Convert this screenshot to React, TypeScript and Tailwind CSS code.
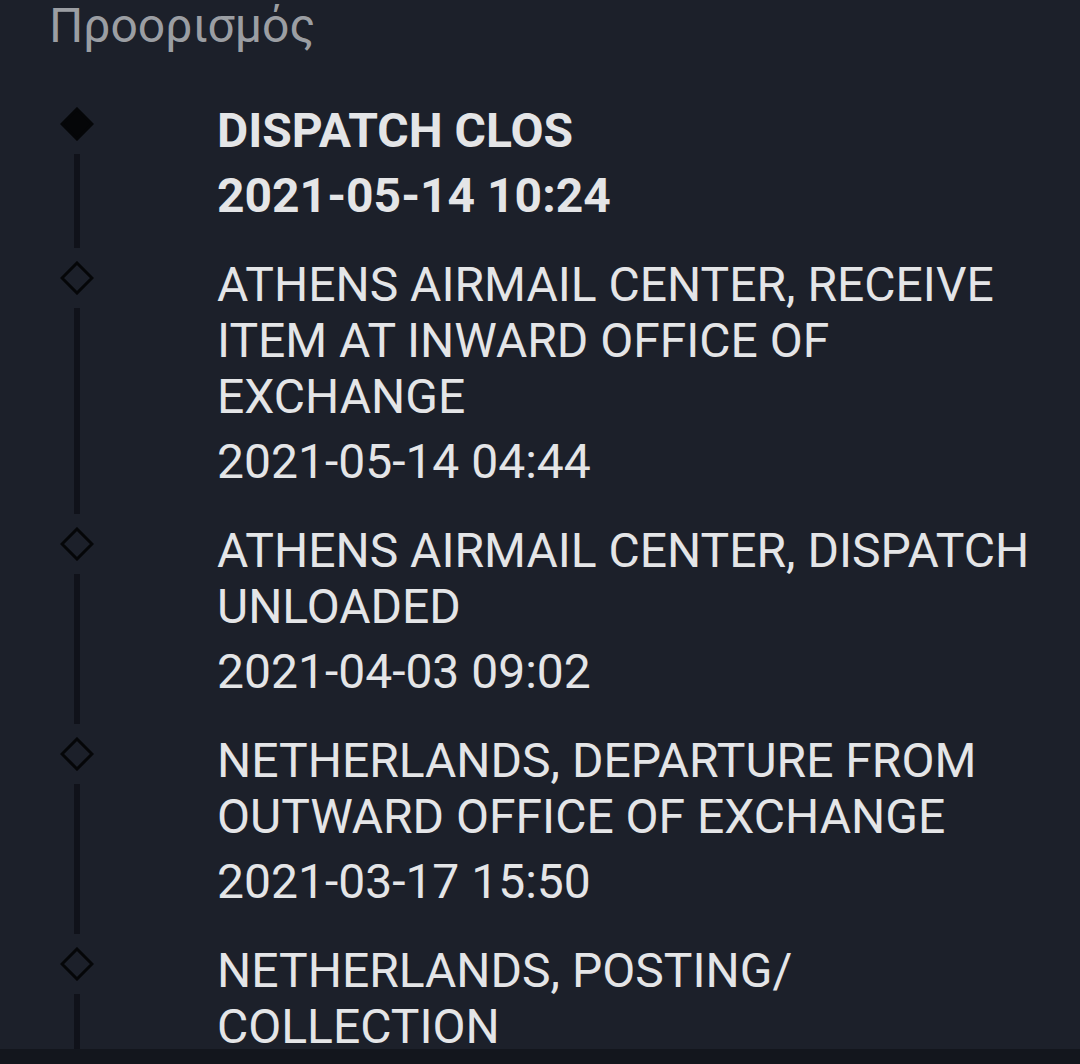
import React from "react";

type Item = { title: React.ReactNode; date: string; bold?: boolean };

const items: Item[] = [
  { title: "DISPATCH CLOS", date: "2021-05-14 10:24", bold: true },
  { title: "ATHENS AIRMAIL CENTER, RECEIVE ITEM AT INWARD OFFICE OF EXCHANGE", date: "2021-05-14 04:44" },
  { title: "ATHENS AIRMAIL CENTER, DISPATCH UNLOADED", date: "2021-04-03 09:02" },
  { title: "NETHERLANDS, DEPARTURE FROM OUTWARD OFFICE OF EXCHANGE", date: "2021-03-17 15:50" },
  {
    title: (
      <>
        NETHERLANDS, POSTING/
        <wbr />
        COLLECTION
      </>
    ),
    date: "2021-03-17 09:12",
  },
];

function Diamond({ filled }: { filled?: boolean }) {
  return (
    <svg width="34" height="34" viewBox="0 0 34 34" className="shrink-0 mt-[4px]">
      <polygon
        points="17,2 32,17 17,32 2,17"
        fill={filled ? "#050608" : "none"}
        stroke="#050608"
        strokeWidth="3"
        strokeLinejoin="miter"
      />
    </svg>
  );
}

export default function App() {
  return (
    <div className="w-[1080px] h-[1064px] bg-[#1c202a] flex flex-col overflow-hidden font-['Roboto',sans-serif]">
      <div className="flex-1 min-h-0 overflow-hidden pl-[48px] pr-[40px]">
        <div className="text-[48px] leading-[56px] text-[#9b9ea3] -mt-[2px] pl-[1px]">Προορισμός</div>
        <div className="mt-[49px] flex flex-col">
          {items.map((it, i) => (
            <div key={i} className="flex">
              <div className="w-[58px] flex flex-col items-center shrink-0">
                <Diamond filled={i === 0} />
                <div className="w-[6px] flex-1 mt-[13px] mb-[9px] bg-[#10121a]" />
              </div>
              <div
                className={
                  "ml-[111px] flex-1 pb-[33px] text-[48px] leading-[56px] text-[#e4e5e7] " +
                  (it.bold ? "font-bold" : "font-normal")
                }
              >
                <div>{it.title}</div>
                <div className="mt-[9px]">{it.date}</div>
              </div>
            </div>
          ))}
        </div>
      </div>
      <div className="h-[15px] shrink-0 bg-[#13161d]" />
    </div>
  );
}
